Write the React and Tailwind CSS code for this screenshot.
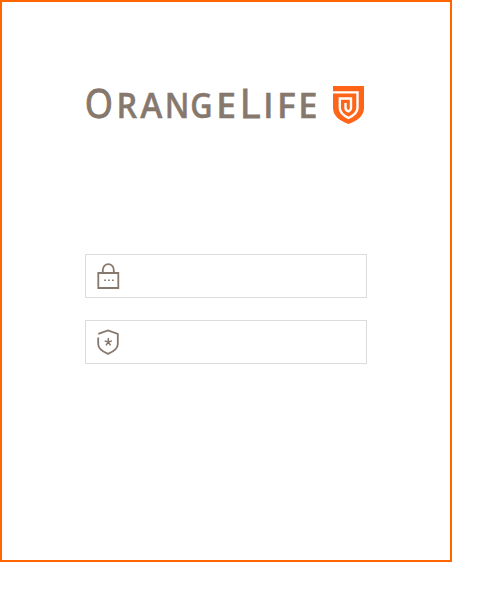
const glyphs = [
  { ch: "O", cx: 98.8, y: 118, size: 41, sx: 0.87, weight: 400, stroke: 1.3 },
  { ch: "R", cx: 126.900, y: 117.8, size: 33.500, sx: 0.97, weight: 600, stroke: 0.4 },
  { ch: "A", cx: 151.300, y: 117.8, size: 33.500, sx: 1, weight: 600, stroke: 0.4 },
  { ch: "N", cx: 177, y: 117.8, size: 33.500, sx: 0.94, weight: 600, stroke: 0.4 },
  { ch: "G", cx: 201.500, y: 117.8, size: 33.500, sx: 0.92, weight: 600, stroke: 0.4 },
  { ch: "E", cx: 226.100, y: 117.8, size: 33.500, sx: 1.06, weight: 600, stroke: 0.4 },
  { ch: "L", cx: 250.100, y: 117.5, size: 40.500, sx: 0.98, weight: 400, stroke: 1 },
  { ch: "I", cx: 268.400, y: 117.8, size: 33.500, sx: 1, weight: 600, stroke: 0.4 },
  { ch: "F", cx: 286.500, y: 117.8, size: 33.500, sx: 1.06, weight: 600, stroke: 0.4 },
  { ch: "E", cx: 307.900, y: 117.8, size: 33.500, sx: 1.03, weight: 600, stroke: 0.4 },
];

function Wordmark() {
  return (
    <svg className="block h-[46px] w-[240px] overflow-visible" viewBox="80 80 240 46" fill="#87786e" stroke="#87786e" fontFamily='"Open Sans", "Noto Sans", sans-serif' textAnchor="middle" aria-label="OrangeLife">
      {glyphs.map((g, i) => (
        <text key={i} transform={`translate(${g.cx} ${g.y}) scale(${g.sx} 1)`} fontSize={g.size} fontWeight={g.weight} strokeWidth={g.stroke}>{g.ch}</text>
      ))}
    </svg>
  );
}

function Emblem() {
  return (
    <svg className="block h-[38px] w-[31px]" viewBox="0 0 31 38" fill="none">
      <path d="M0 0H31V22C31 30 24 35 15.5 38C7 35 0 30 0 22Z" fill="#ff6418" />
      <path d="M0 6.400H24.500V22C24.500 26.500 20.500 29.500 15.500 32C10.500 29.500 6.800 26.500 6.800 22V12.500H18V22C18 24 17 24.600 15.500 25.300C13.300 24.500 12.500 23.300 12.500 22V17" stroke="#fff" strokeWidth="2.400" />
    </svg>
  );
}

function LockIcon() {
  return (
    <svg className="h-[26px] w-6" viewBox="0 0 24 26" fill="none" stroke="#87786e" strokeWidth="1.8">
      <path d="M2.300 10H22.300V25H2.300Z M6.800 10V7a5.500 5.800 0 0 1 11 0V10" />
      <path d="M8.200 17.300h1.700m2.200 0h1.700m2.200 0h1.700" strokeWidth="1.6" />
    </svg>
  );
}

function ShieldIcon() {
  return (
    <svg className="h-[26px] w-6" viewBox="0 0 24 26" fill="none" stroke="#87786e" strokeWidth="1.8">
      <path d="M2.300 4.900L12 1.500L21.800 4.900V15C21.800 19.500 17 22.800 12 24.800C7 22.800 2.200 19.500 2.200 15V8.500" />
      <path d="M12.300 9V13M12.300 13L8.700 11.900M12.300 13L15.900 11.900M12.300 13L10 16.400M12.300 13L14.600 16.400" strokeWidth="1.500" />
    </svg>
  );
}

function Field({ label, type, children }) {
  return (
    <label className="flex h-11 w-[282px] items-center border border-[#dcdcdc] bg-white pl-[10px]">
      {children}
      <input aria-label={label} type={type} className="h-full min-w-0 flex-1 px-3 outline-none" />
    </label>
  );
}

export default function App() {
  return (
    <main className="h-[613px] w-[493px] bg-white">
      <form className="h-[562px] w-[452px] border-2 border-[#ff6600] bg-white px-[83px]">
        <h1 className="-ml-[5px] flex w-[300px] gap-[13px] pt-[78px]">
          <Wordmark />
          <span className="pt-[6px]"><Emblem /></span>
        </h1>
        <div className="mt-32 flex flex-col gap-[22px]">
          <Field label="ID" type="text"><LockIcon /></Field>
          <Field label="Password" type="password"><ShieldIcon /></Field>
        </div>
      </form>
    </main>
  );
}
